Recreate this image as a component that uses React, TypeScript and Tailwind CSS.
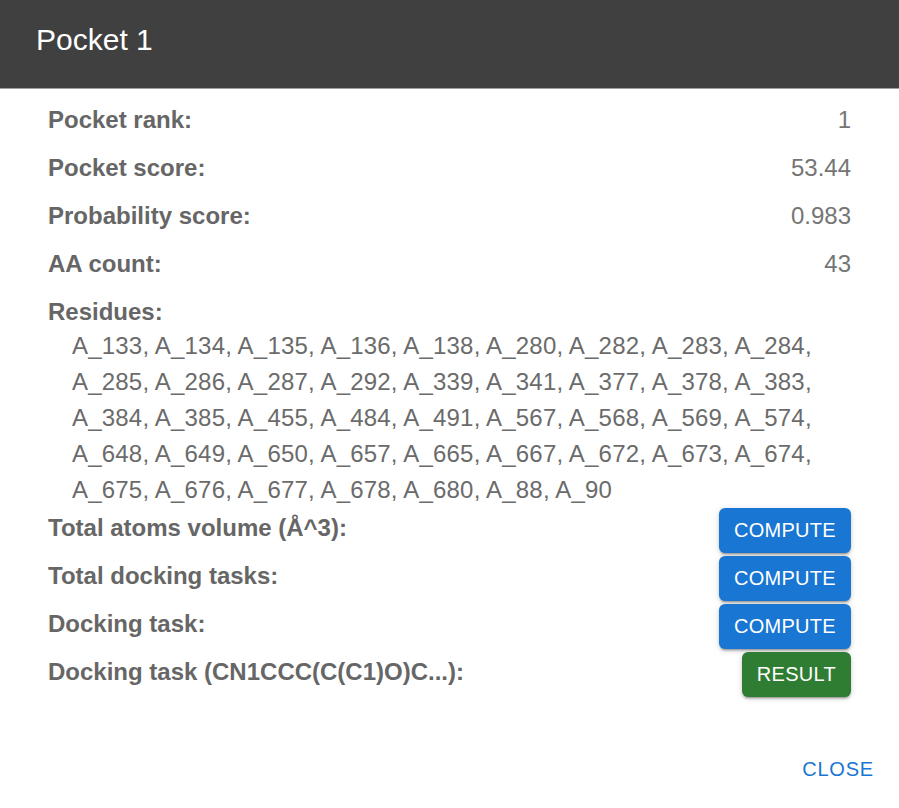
import React from "react";

const font = { fontFamily: '"Liberation Sans", Arial, sans-serif' };

const residueLines = [
  "A_133, A_134, A_135, A_136, A_138, A_280, A_282, A_283, A_284,",
  "A_285, A_286, A_287, A_292, A_339, A_341, A_377, A_378, A_383,",
  "A_384, A_385, A_455, A_484, A_491, A_567, A_568, A_569, A_574,",
  "A_648, A_649, A_650, A_657, A_665, A_667, A_672, A_673, A_674,",
  "A_675, A_676, A_677, A_678, A_680, A_88, A_90",
];

function InfoRow({ label, value }: { label: string; value: string }) {
  return (
    <div className="flex justify-between items-start h-[48px]">
      <div className="text-[24px] leading-[36px] font-bold text-[#666666]">{label}</div>
      <div className="text-[24px] leading-[36px] text-[#757575]">{value}</div>
    </div>
  );
}

function ActionRow({ label, action, green }: { label: string; action: string; green?: boolean }) {
  return (
    <div className="flex justify-between items-start h-[48px]">
      <div className="pt-[2px] text-[24px] leading-[36px] font-bold text-[#666666]">{label}</div>
      <button
        className={
          (green ? "bg-[#2e7d32]" : "bg-[#1976d2]") +
          " h-[45px] px-[15px] rounded-[6px] text-white text-[20px] tracking-[0.3px] leading-[45px] shadow-[0px_3px_2px_-2px_rgba(0,0,0,0.25),0px_2px_3px_0px_rgba(0,0,0,0.16),0px_1px_7px_0px_rgba(0,0,0,0.12)]"
        }
      >
        {action}
      </button>
    </div>
  );
}

export default function App() {
  return (
    <div className="w-[899px] h-[808px] bg-white overflow-hidden" style={font}>
      <div className="h-[89px] bg-[#404040] border-b border-[#9e9e9e] pl-[36px] pt-[22px]">
        <div className="text-[30px] leading-[36px] text-white">Pocket 1</div>
      </div>
      <div className="pl-[48px] pr-[48px] pt-[13px]">
        <InfoRow label="Pocket rank:" value="1" />
        <InfoRow label="Pocket score:" value="53.44" />
        <InfoRow label="Probability score:" value="0.983" />
        <InfoRow label="AA count:" value="43" />
        <div className="h-[34px] text-[24px] leading-[36px] font-bold text-[#666666]">Residues:</div>
        <div className="pl-[24px] text-[24px] leading-[36px] tracking-[0.2px] text-[#6b6b6b]">
          {residueLines.map((l) => (
            <div key={l} className="whitespace-nowrap">{l}</div>
          ))}
        </div>
        <div>
          <ActionRow label="Total atoms volume (Å^3):" action="COMPUTE" />
          <ActionRow label="Total docking tasks:" action="COMPUTE" />
          <ActionRow label="Docking task:" action="COMPUTE" />
          <ActionRow label="Docking task (CN1CCC(C(C1)O)C...):" action="RESULT" green />
        </div>
      </div>
      <div className="flex justify-end pr-[25px] mt-[51px]">
        <div className="text-[20px] leading-[36px] tracking-[0.8px] text-[#1976d2]">CLOSE</div>
      </div>
    </div>
  );
}
